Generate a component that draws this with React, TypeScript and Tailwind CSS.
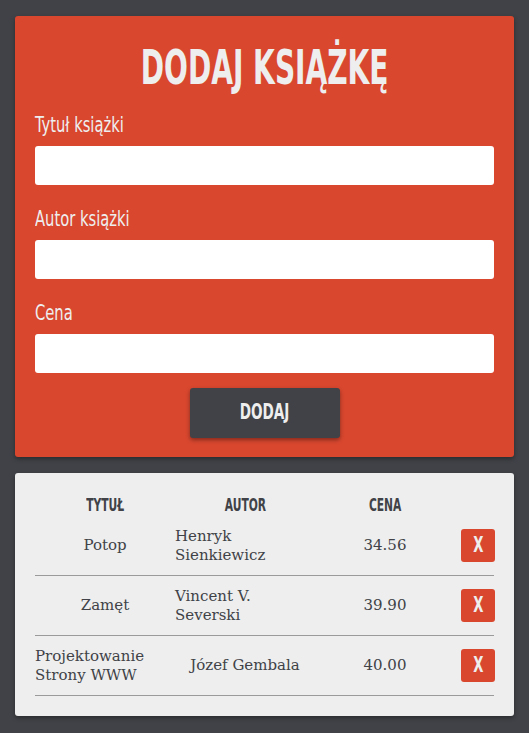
const books = [
  { title: "Potop", author: "Henryk Sienkiewicz", price: "34.56", authorLeft: true },
  { title: "Zamęt", author: "Vincent V. Severski", price: "39.90", authorLeft: true },
  { title: "Projektowanie Strony WWW", author: "Józef Gembala", price: "40.00", authorLeft: false },
];

// brak Oswalda - zwężamy DejaVu Sans Condensed
const head = { fontFamily: '"Liberation Sans Narrow", "DejaVu Sans Condensed", "Liberation Sans", sans-serif' };
const body = { fontFamily: '"DejaVu Serif", "Liberation Serif", serif' };

function Field({ label }: { label: string }) {
  return (
    <div className="flex flex-col">
      <label className="text-[21px] leading-[28px] text-[#eeeeee]" style={head}>
        <span className="inline-block origin-left scale-x-[0.78]">{label}</span>
      </label>
      <input className="mt-[7px] h-[39px] w-full rounded-[3px] bg-white px-2 outline-none" />
    </div>
  );
}

export default function App() {
  return (
    <div className="min-h-[733px] bg-[#404247] px-[15px] pt-[16px] pb-[17px]">
      {/* formularz */}
      <div className="rounded-[3px] bg-[#d9472f] px-[20px] pt-[21px] pb-[19px] shadow-[0_2px_4px_rgba(0,0,0,0.35)]">
        <h1 className="text-center text-[48px] font-bold leading-[60px] text-[#eeeeee]" style={head}>
          <span className="inline-block scale-x-[0.65]">DODAJ KSIĄŻKĘ</span>
        </h1>
        <div className="mt-[14px] flex flex-col gap-[20px]">
          <Field label="Tytuł książki" />
          <Field label="Autor książki" />
          <Field label="Cena" />
        </div>
        <div className="mt-[15px] flex justify-center">
          <button className="h-[50px] w-[150px] rounded-[3px] bg-[#404247] text-[21px] font-bold text-[#eeeeee] shadow-[0_2px_4px_rgba(0,0,0,0.4)]" style={head}>
            <span className="inline-block scale-x-[0.72]">DODAJ</span>
          </button>
        </div>
      </div>

      {/* lista */}
      <div className="mt-[16px] rounded-[3px] bg-[#eeeeee] px-[20px] pt-[20px] pb-[20px] shadow-[0_2px_4px_rgba(0,0,0,0.35)]">
        <div className="grid h-[23px] grid-cols-[140px_140px_140px_40px] items-center text-[17px] font-bold text-[#404247]" style={head}>
          <div className="text-center"><span className="inline-block scale-x-[0.7]">TYTUŁ</span></div>
          <div className="text-center"><span className="inline-block scale-x-[0.7]">AUTOR</span></div>
          <div className="text-center"><span className="inline-block scale-x-[0.7]">CENA</span></div>
          <div />
        </div>
        {books.map((b) => (
          <div key={b.title} className="grid h-[60px] grid-cols-[140px_140px_140px_40px] items-center border-b border-[#9a9a9a] text-[15px] leading-[19px] text-[#404247]" style={body}>
            <div className={b.title.length > 10 ? "text-left" : "text-center"}>{b.title}</div>
            <div className={b.authorLeft ? "pr-[30px] text-left" : "text-center"}>{b.author}</div>
            <div className="text-center">{b.price}</div>
            <div className="flex justify-end">
              <button className="h-[33px] w-[34px] rounded-[3px] bg-[#d9472f] text-[21px] font-bold text-[#eeeeee]" style={head}>
                <span className="inline-block scale-x-[0.7]">X</span>
              </button>
            </div>
          </div>
        ))}
      </div>
    </div>
  );
}
